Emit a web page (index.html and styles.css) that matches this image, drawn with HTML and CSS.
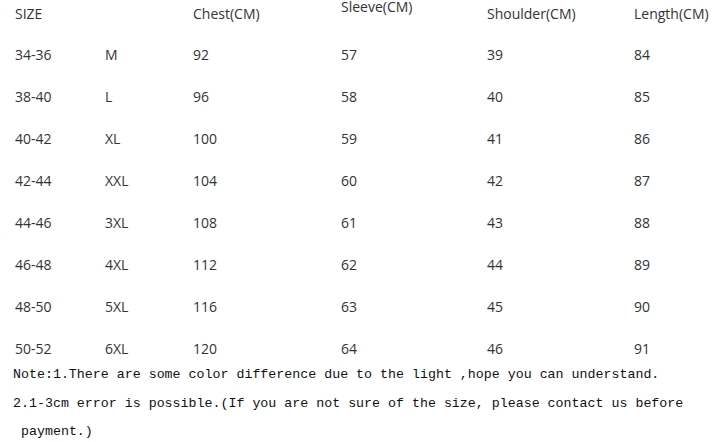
FILE: index.html
```html
<!DOCTYPE html>
<html>
<head>
<meta charset="utf-8">
<link rel="stylesheet" href="styles.css">
</head>
<body>
<div class="table">
  <div class="row head">
    <span>SIZE</span><span></span><span>Chest(CM)</span><span class="raised">Sleeve(CM)</span><span>Shoulder(CM)</span><span>Length(CM)</span>
  </div>
  <div class="row"><span>34-36</span><span>M</span><span>92</span><span>57</span><span>39</span><span>84</span></div>
  <div class="row"><span>38-40</span><span>L</span><span>96</span><span>58</span><span>40</span><span>85</span></div>
  <div class="row"><span>40-42</span><span>XL</span><span>100</span><span>59</span><span>41</span><span>86</span></div>
  <div class="row"><span>42-44</span><span>XXL</span><span>104</span><span>60</span><span>42</span><span>87</span></div>
  <div class="row"><span>44-46</span><span>3XL</span><span>108</span><span>61</span><span>43</span><span>88</span></div>
  <div class="row"><span>46-48</span><span>4XL</span><span>112</span><span>62</span><span>44</span><span>89</span></div>
  <div class="row"><span>48-50</span><span>5XL</span><span>116</span><span>63</span><span>45</span><span>90</span></div>
  <div class="row"><span>50-52</span><span>6XL</span><span>120</span><span>64</span><span>46</span><span>91</span></div>
</div>
<div class="notes">
  <p>Note:1.There are some color difference due to the light ,hope you can understand.</p>
  <p>2.1-3cm error is possible.(If you are not sure of the size, please contact us before</p>
  <p class="indent">payment.)</p>
</div>
</body>
</html>
```

FILE: styles.css
```css
html, body {
  margin: 0;
  padding: 0;
  background: #ffffff;
}
body {
  width: 718px;
  height: 442px;
  overflow: hidden;
}
.table {
  padding-left: 15px;
  font-family: "Open Sans", sans-serif;
  font-size: 14px;
  color: #333333;
}
.row {
  display: grid;
  grid-template-columns: 90px 88px 148px 146px 147px 1fr;
  height: 42px;
  line-height: 42px;
  align-items: start;
}
.row span {
  white-space: nowrap;
}
.row.head {
  height: 34px;
  line-height: 28px;
}
.row.head .raised {
  line-height: 13px;
}
.notes {
  margin-top: -9px;
  padding-left: 13px;
  font-family: "Liberation Mono", monospace;
  font-size: 13.3px;
  color: #111111;
}
.notes p {
  margin: 0;
  height: 28.5px;
  line-height: 28.5px;
  white-space: pre;
}
.notes .indent {
  padding-left: 8px;
}
```
